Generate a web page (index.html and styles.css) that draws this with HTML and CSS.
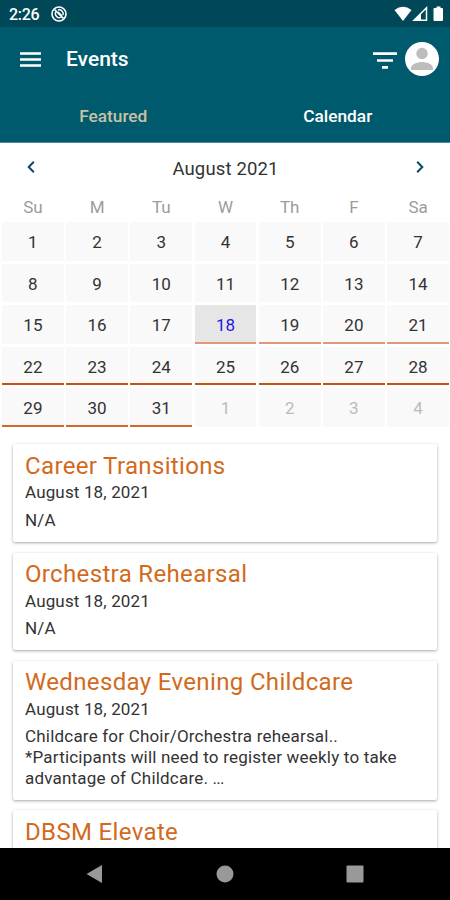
FILE: index.html
```html
<!DOCTYPE html>
<html lang="en">
<head>
<meta charset="UTF-8">
<meta name="viewport" content="width=device-width, initial-scale=1.0">
<title>Events</title>
<link rel="stylesheet" href="styles.css">
</head>
<body>

<div class="status">
  <span class="time">2:26</span>
  <svg class="alarm" viewBox="0 0 16 16" width="16" height="16">
    <circle cx="8" cy="8" r="7" fill="none" stroke="#fff" stroke-width="1.6"/>
    <path d="M5 5.500a4 4 0 0 0 5.500 5.500M7 4a4 4 0 0 1 5 5" fill="none" stroke="#fff" stroke-width="1.400"/>
    <path d="M3.500 3.500l9 9M7 6l4 4" stroke="#fff" stroke-width="1.7"/>
  </svg>
  <svg class="signals" viewBox="0 0 50 16" width="50" height="16">
    <path d="M0.500 4Q9 -2.500 17.500 4L9 15z" fill="#fff"/>
    <path d="M32.500 1.800V14.200H20z" fill="none" stroke="#fff" stroke-width="1.500"/>
    <path d="M27 7V14H20z" fill="#fff"/>
    <path d="M40.500 2h2V0.500h4V2H48a1 1 0 0 1 1 1v11a1 1 0 0 1-1 1h-7.500a1 1 0 0 1-1-1V3a1 1 0 0 1 1-1z" fill="#fff"/>
  </svg>
</div>

<header>
  <div class="toolbar">
    <svg class="menu" viewBox="0 0 21 15" width="21" height="15"><path d="M0 1.500h21M0 7.500h21M0 13.500h21" stroke="#fff" stroke-width="2.300"/></svg>
    <h1>Events</h1>
    <svg class="filter" viewBox="0 0 24 17" width="24" height="17"><path d="M0 1.600h24M4 8.500h16M9 15.300h6" stroke="#fff" stroke-width="2.700"/></svg>
    <svg class="avatar" viewBox="0 0 34 34" width="34" height="34">
      <circle cx="17" cy="17" r="17" fill="#fff"/>
      <circle cx="17" cy="11.500" r="5.700" fill="#bdbdbd"/>
      <path d="M6 28v-2c0-4 7-6 11-6s11 2 11 6v2z" fill="#bdbdbd"/>
    </svg>
  </div>
  <nav class="tabs">
    <a class="tab featured">Featured</a>
    <a class="tab">Calendar</a>
  </nav>
</header>

<main>
  <section class="calendar">
    <div class="month">
      <svg viewBox="0 0 8 12" width="8" height="12"><path d="M6.800 0.800L1.700 6l5.100 5.200" fill="none" stroke="#0b4a6b" stroke-width="2"/></svg>
      <h2>August 2021</h2>
      <svg viewBox="0 0 8 12" width="8" height="12"><path d="M1.200 0.800L6.300 6l-5.100 5.200" fill="none" stroke="#0b4a6b" stroke-width="2"/></svg>
    </div>
    <div class="week names">
      <span>Su</span><span>M</span><span>Tu</span><span>W</span><span>Th</span><span>F</span><span>Sa</span>
    </div>
    <div class="week days">
      <span>1</span><span>2</span><span>3</span><span>4</span><span>5</span><span>6</span><span>7</span>
      <span>8</span><span>9</span><span>10</span><span>11</span><span>12</span><span>13</span><span>14</span>
      <span>15</span><span>16</span><span>17</span><span class="event soft today">18</span><span class="event soft">19</span><span class="event soft">20</span><span class="event soft">21</span>
      <span class="event">22</span><span class="event">23</span><span class="event">24</span><span class="event">25</span><span class="event">26</span><span class="event">27</span><span class="event">28</span>
      <span class="event last">29</span><span class="event last">30</span><span class="event last">31</span><span class="other">1</span><span class="other">2</span><span class="other">3</span><span class="other">4</span>
    </div>
  </section>

  <section class="events">
    <article class="card">
      <h3>Career Transitions</h3>
      <p class="date">August 18, 2021</p>
      <p class="text">N/A</p>
    </article>
    <article class="card">
      <h3>Orchestra Rehearsal</h3>
      <p class="date">August 18, 2021</p>
      <p class="text">N/A</p>
    </article>
    <article class="card">
      <h3>Wednesday Evening Childcare</h3>
      <p class="date">August 18, 2021</p>
      <p class="text">Childcare for Choir/Orchestra rehearsal..<br>*Participants will need to register weekly to take<br>advantage of Childcare. <span class="more">...</span></p>
    </article>
    <article class="card">
      <h3>DBSM Elevate</h3>
    </article>
  </section>
</main>

<footer>
  <svg viewBox="0 0 18 20" width="18" height="20"><path d="M0.500 10L16 1v18z" fill="#999"/></svg>
  <svg viewBox="0 0 18 18" width="18" height="18"><circle cx="9" cy="9" r="8.500" fill="#999"/></svg>
  <svg viewBox="0 0 18 18" width="18" height="18"><rect x="0.500" y="0.500" width="17" height="17" rx="1" fill="#999"/></svg>
</footer>

</body>
</html>
```
FILE: styles.css
```css
* {box-sizing:border-box;}
body {margin:0; height:900px; overflow:hidden; display:flex; flex-direction:column; font-family:Roboto, sans-serif; background:#fff; color:#333;}
h1, h2, h3, p {margin:0; font-weight:400;}
svg {display:block; flex:none;}

.status {height:27px; flex:none; background:#004757; color:#fff; display:flex; align-items:center; padding:1px 6px 0 9px;}
.time {font-size:16px; font-weight:500; width:42px; letter-spacing:-0.3px;}
.signals {margin-left:auto;}

header {height:116px; flex:none; background:#005a6e; color:#fff; border-bottom:1px solid #4d8b99;}
.toolbar {height:64px; display:flex; align-items:center; padding:0 11px 0 20px;}
.toolbar h1 {font-size:21px; font-weight:500; margin-left:25px; margin-right:auto;}
.filter {margin-top:2px;}
.avatar {margin-left:8px;}
.tabs {display:flex; height:50px; align-items:center; padding-left:1px;}
.tab {flex:1; text-align:center; font-size:17.3px; line-height:20px; font-weight:500;}
.featured {color:#c9c2a5;}

main {flex:1; min-height:0; overflow:hidden;}
.month {height:48px; display:flex; align-items:center; justify-content:space-between; padding:0 26px 0 27px;}
.month h2 {font-size:18.5px; letter-spacing:0.15px; padding-top:3px;}
.week {display:grid; grid-template-columns:repeat(7, 1fr); text-align:center; gap:3px 2.4px; padding:0 1px 0 2px;}
.names {height:31px; line-height:32px; font-size:17px; color:#9c9c9c;}
.days {grid-auto-rows:38.6px; font-size:17px;}
.days span {background:#f9f9f9; line-height:41px; border-bottom:0 solid #c9510f;}
.days .event {border-bottom-width:2.5px;}
.days .soft {border-color:#dc9a7a;}
.days .last {border-color:#d2692f;}
.days .today {background:#e6e6e6; color:#2418e0;}
.days .other {color:#bbb;}

.events {display:flex; flex-direction:column; gap:10.5px; padding:17.5px 13px 0;}
.card {padding:7.5px 10px 11.5px 12px; background:#fff; border-radius:2px; box-shadow:0 1px 3px rgba(0,0,0,0.35);}
.card h3 {font-size:24px; letter-spacing:0.35px; line-height:28px; color:#d26a1c; white-space:nowrap;}
.date {font-size:17px; letter-spacing:0.15px; line-height:21px; margin-top:2.5px;}
.text {font-size:17px; letter-spacing:0.2px; line-height:20.6px; margin-top:6.6px; white-space:nowrap;}
.more {letter-spacing:-0.8px;}

footer {height:52px; flex:none; background:#000; display:flex; align-items:center; justify-content:space-between; padding:0 86px;}
```
